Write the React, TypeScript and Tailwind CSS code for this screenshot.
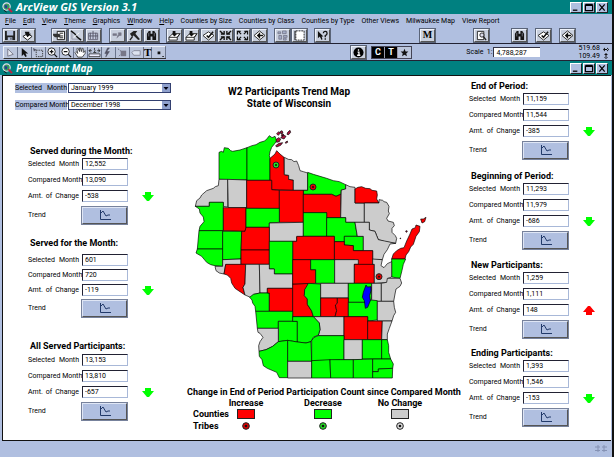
import { useId, type ReactNode } from "react";

const R = "#ff0000";
const G = "#00ff00";
const N = "#cccccc";

/* County shapes: fill colour and outline points */
const counties: [string, string][] = [
  [G, "117,100 125,97 130,100 133,86 145,88 152,95 158,97 180,93 201,86 201,183 117,181"],
  [G, "201,86 216,80 228,77 240,70 254,66 262,58 268,50 276,56 285,52 290,65 284,74 275,85 270,98 268,110 270,118 270,184 201,184"],
  [R, "270,118 285,105 290,95 300,105 312,115 313,167 326,169 326,181 340,183 340,214 275,212 275,184 270,184"],
  [N, "313,115 325,121 335,122 342,128 350,126 356,140 360,155 370,158 383,162 383,214 340,214 340,183 326,181 326,169 313,167"],
  [G, "383,160 400,166 420,172 440,178 460,185 478,188 497,197 497,210 484,213 482,226 468,232 455,226 370,226 370,214 383,214"],
  [N, "117,181 143,181 143,264 130,262 130,250 88,250 88,262 46,262 50,245 60,237 65,228 80,215 100,208 106,203 115,200"],
  [N, "143,181 200,183 200,266 145,266"],
  [R, "200,184 275,184 275,212 298,214 298,269 200,268"],
  [R, "298,214 370,214 370,310 298,310"],
  [G, "46,262 88,262 88,250 130,250 130,335 57,335 60,322 72,308 70,294 60,282 58,270"],
  [R, "130,266 198,266 198,325 195,337 130,335"],
  [G, "198,268 298,268 298,310 268,312 268,325 198,325"],
  [N, "268,312 370,310 370,352 350,354 350,367 268,367"],
  [R, "370,226 455,226 468,232 482,226 482,296 440,296 440,281 370,281"],
  [G, "370,281 440,281 440,352 370,352"],
  [N, "484,213 497,210 497,197 510,203 525,205 525,252 553,252 553,310 497,310 497,296 482,296"],
  [R, "525,210 534,205 545,203 557,208 570,209 576,214 590,216 592,228 590,240 597,252 525,252"],
  [N, "553,252 597,252 597,242 608,244 612,248 620,250 627,262 625,276 628,284 620,298 624,306 640,310 643,320 636,328 636,340 646,350 650,358 647,373 615,368 595,362 590,350 585,337 568,333 568,310 553,310"],
  [G, "440,296 497,296 497,310 525,310 532,352 493,352 493,368 463,368 463,352 440,352"],
  [G, "493,352 550,352 550,395 520,395 520,380 493,378"],
  [N, "525,310 568,310 568,333 585,337 590,350 595,362 647,373 630,375 622,392 612,406 607,422 578,422 578,395 550,395 550,352 532,352"],
  [R, "463,368 493,368 493,378 520,380 520,395 578,395 578,438 523,438 523,422 463,422"],
  [R, "350,352 463,352 463,422 338,422 338,367 350,367"],
  [R, "635,420 640,405 650,395 662,388 672,386 680,366 690,345 696,330 706,326 708,318 720,322 718,338 708,352 700,376 692,384 686,398 678,408 675,420"],
  [R, "722,300 730,300 738,295 734,308 726,312"],
  [G, "635,420 677,420 670,436 666,454 660,478 635,474"],
  [G, "57,335 128,335 128,390 52,390"],
  [G, "52,390 128,390 128,442 105,440 92,437 80,430 65,412 48,402"],
  [G, "128,337 185,337 183,420 128,422"],
  [N, "128,422 183,420 183,437 137,437 132,465 118,462 108,455 105,442 128,442"],
  [R, "195,337 198,325 268,325 268,393 183,393 185,337"],
  [R, "183,393 268,393 268,436 183,436"],
  [G, "268,367 338,367 338,465 283,465 283,450 268,450"],
  [R, "137,436 197,436 195,495 189,505 195,528 180,518 165,508 155,492 152,478 142,468 132,465"],
  [N, "197,436 238,436 240,522 222,526 214,536 195,528 189,505 195,495"],
  [N, "238,436 268,436 268,450 283,450 283,465 338,465 338,508 262,508 262,522 240,522"],
  [G, "209,535 220,526 240,522 268,522 268,577 227,577 225,562 218,552 216,543"],
  [R, "262,508 338,508 338,577 268,577 268,522 262,522"],
  [R, "338,495 385,493 384,503 374,512 373,530 382,540 382,556 395,576 400,593 338,593"],
  [R, "338,422 392,422 392,452 407,452 407,493 338,495"],
  [G, "392,422 464,422 464,493 407,493 407,452 392,452"],
  [N, "464,422 535,422 535,436 523,436 523,493 464,493"],
  [R, "523,436 583,436 583,493 523,493"],
  [N, "578,420 607,422 603,440 612,446 622,434 635,428 635,474 624,478 622,490 583,493 583,436 578,436"],
  [G, "385,493 422,495 422,593 400,593 395,576 382,556 382,540 373,530 374,512"],
  [N, "422,493 505,493 505,537 422,537"],
  [G, "505,493 575,493 575,540 560,550 505,550"],
  [N, "575,493 604,493 604,547 575,547"],
  [N, "604,493 620,490 622,478 660,478 665,492 660,502 648,510 645,525 641,547 604,547"],
  [R, "422,537 472,537 472,553 466,558 470,575 465,593 422,593"],
  [R, "472,537 505,537 505,593 465,593 470,575 466,558 472,553"],
  [G, "505,550 560,550 575,543 592,545 592,603 563,606 563,593 505,593"],
  [N, "592,547 641,547 643,565 647,580 641,590 636,606 592,606"],
  [N, "400,593 492,593 492,650 415,650 420,632 418,612"],
  [R, "492,593 563,593 563,662 492,662"],
  [R, "563,606 607,606 605,662 563,662"],
  [N, "607,606 636,606 628,628 622,645 622,662 605,662"],
  [G, "227,577 338,577 338,607 295,607 295,628 232,628"],
  [G, "295,607 352,607 352,669 323,664 295,668"],
  [G, "338,593 400,593 418,612 420,632 415,648 400,655 393,668 378,672 352,669 352,607 338,607"],
  [N, "232,628 295,628 295,668 278,682 258,692 237,697 236,680 240,668 249,655 240,643 234,640"],
  [G, "237,697 258,692 278,682 295,668 323,664 323,776 298,776 290,760 276,754 262,748 250,740 246,722 238,712"],
  [G, "323,664 352,669 378,672 393,668 395,727 323,727"],
  [N, "323,727 395,727 395,777 323,777"],
  [G, "395,665 402,655 415,650 492,650 492,722 395,727"],
  [N, "492,662 547,662 547,722 492,722"],
  [G, "547,662 605,662 605,720 547,720"],
  [G, "605,662 622,662 626,680 626,700 632,720 605,720"],
  [G, "395,725 450,722 452,777 395,777"],
  [G, "450,722 520,722 520,777 452,777"],
  [G, "520,722 578,720 578,777 520,777"],
  [G, "578,720 632,720 640,735 638,748 595,750 595,758 578,758"],
  [G, "578,758 595,758 595,750 638,748 637,777 578,777"],
  ["#0000ff", "558,498 562,504 573,503 573,515 569,530 571,545 563,565 556,568 553,545 547,535 550,520"],
];

function Tribe({ cx, cy, fill }: { cx: number; cy: number; fill: string }) {
  return (
    <g>
      <circle cx={cx} cy={cy} r={9} fill={fill} stroke="#222" strokeWidth={3} />
      <circle cx={cx} cy={cy} r={3} fill="#111" />
    </g>
  );
}

function WisconsinMap() {
  return (
    <svg viewBox="30 0 720 795" className="ml-[10px] mt-[9px] block h-[265px] w-[240px] shrink-0" role="img" aria-label="Wisconsin counties">
      {counties.map(([fill, points], i) => (
        <polygon key={i} points={points} fill={fill} stroke="#000" strokeWidth={2} strokeLinejoin="round" />
      ))}
      <g fill="#b01040" stroke="#000" strokeWidth={2}>
        <path d="M288 62l8-6 6 4-4 8-8 2zM302 56l8-8 8 4-6 8zM290 44l6-6 5 5-7 6zM300 38l6-3 3 6-6 3zM323 40l7-6 2 6-6 7-5-1zM287 80l10-7 11-2-6 8-12 5zM316 70l6-4 1 4-6 3zM306 44l5 2-2 6-5-2z" />
        <path d="M678 335l4 1-2 4-3-2zM660 357h2v2h-2z" />
      </g>
      <Tribe cx={288} cy={138} fill="#22dd22" />
      <Tribe cx={399} cy={204} fill="#e00000" />
      <Tribe cx={597} cy={473} fill="#e00000" />
    </svg>
  );
}

const icons: Record<string, ReactNode> = {
  save: (
    <>
      <path d="M1 1h11v10H1z" fill="#222" />
      <path d="M3 1h7v5H3zM4 8h5v3H4z" fill="#b4c0dc" />
      <path d="M7 8.500h1v2H7z" fill="#222" />
    </>
  ),
  addTheme: (
    <>
      <path d="M2 7l5-3 5 3-5 4z" fill="#fff" stroke="#111" />
      <path d="M4 2h5v2h2L7 8 5 5z" fill="#111" />
    </>
  ),
  props: (
    <>
      <path d="M4.500 1.500h8v9h-8z" fill="#fff" stroke="#111" />
      <path d="M0 4h6l2 1v3H2L0 6z" fill="#333" />
      <path d="M7 3.500h4M8 6.500h3M7 8.500h4" stroke="#111" />
    </>
  ),
  legend: (
    <>
      <path d="M2 2v8h10" stroke="#99a" fill="none" />
      <path d="M1 1l4 3 3 4 4 3" stroke="#111" strokeWidth="1.600" fill="none" />
      <path d="M4 8l6-5" stroke="#fff" />
    </>
  ),
  table: (
    <>
      <path d="M1.500 3.500h10v7h-10z" stroke="#667" fill="#c6cde0" />
      <path d="M3.500 3v7M6.500 1v9M9.500 3v7M2 6.500h10" stroke="#556" />
    </>
  ),
  query: (
    <path d="M2 4h4v2H2zM8 3h3v3H8zM6 9l3-3-2 0" fill="#778" stroke="#778" strokeWidth=".6" />
  ),
  hammer: (
    <>
      <path d="M2 4l4-3h4L8 4l5 6-2 1-5-5-2 1z" fill="#222" />
      <path d="M5 7l-3 4" stroke="#222" strokeWidth="1.500" />
    </>
  ),
  find: (
    <>
      <path d="M2 4l2-3h2v3h2V1h2l2 3v7H8V7H6v4H2z" fill="#151515" />
      <path d="M4 3v4M10 3v4" stroke="#99a" strokeWidth=".7" />
    </>
  ),
  layer: (
    <>
      <path d="M1 8l4-4h8l-3 4v3H1z" fill="#fff" stroke="#222" />
      <path d="M1 8h9l3-4" fill="none" stroke="#222" />
      <path d="M5 1h3v3h2L7 7 4 4h1z" fill="#111" />
    </>
  ),
  selected: (
    <>
      <path d="M1 6l6-4 6 4-6 5z" fill="#fff" stroke="#222" />
      <path d="M5 6l2 2 5-6" stroke="#111" strokeWidth="1.600" fill="none" />
    </>
  ),
  zoomIn: (
    <path d="M1 1l4 4M13 1L9 5M1 11l4-4M13 11L9 7M2 4.500h3.500V1M12 4.500H8.500V1M2 7.500h3.500V11M12 7.500H8.500V11" stroke="#111" strokeWidth="1.500" fill="none" />
  ),
  zoomOut: (
    <path d="M2 1l3.500 3.500M12 1L8.500 4.500M2 11l3.500-3.500M12 11L8.500 7.500M1.500 5V1.500H5M9 1.500h3.500V5M1.500 7v3.500H5M9 10.500h3.500V7" stroke="#111" strokeWidth="1.300" fill="none" />
  ),
  previous: (
    <>
      <path d="M1 6l6-5 6 5-6 5z" fill="#fff" stroke="#222" />
      <path d="M11 6H5M7 4L5 6l2 2z" stroke="#111" strokeWidth="1.400" fill="#111" />
    </>
  ),
  selectAll: (
    <path d="M2 2h3v2H2zM7 1h4v3H7zM3 6h3v4H3zM8 6h4v2H8zM8 9h3v2H8z" fill="#a4aec8" stroke="#667" strokeWidth=".7" />
  ),
  clear: (
    <>
      <path d="M3 1h9v10H3z" fill="#fff" stroke="#222" strokeDasharray="2 1" />
      <path d="M2 1v10" stroke="#222" />
    </>
  ),
  help: (
    <>
      <path d="M2 1v8l2-2 2 4 1-1-1-3h2z" fill="#111" />
      <path d="M8 3.500q0-2 2-2t2 2-2 2.500v2M10 9v1.500" stroke="#111" strokeWidth="1.400" fill="none" />
    </>
  ),
  report: (
    <>
      <path d="M2.500 1.500h7v9h-7z" fill="#fff" stroke="#222" />
      <circle cx="7.500" cy="5.500" r="2.300" fill="#dde" stroke="#222" />
      <path d="M9 7l3 4" stroke="#222" strokeWidth="1.500" />
    </>
  ),
  pick: <path d="M4 2v8l6-2z" fill="#e4e8f2" stroke="#778" />,
  pointer: <path d="M4 1v9l2-2 2 3 1.500-1L8 7h3z" fill="#111" />,
  marquee: (
    <>
      <path d="M4.500 3.500h7v7h-7z" fill="none" stroke="#333" strokeDasharray="1.500 1" />
      <path d="M1 1l4 2-3 2z" fill="#556" />
    </>
  ),
  plus: (
    <>
      <circle cx="6" cy="5" r="4" fill="#fff" stroke="#222" />
      <path d="M4 5h4M6 3v4M9 8l3 3" stroke="#111" strokeWidth="1.400" />
    </>
  ),
  minus: (
    <>
      <circle cx="6" cy="5" r="4" fill="#fff" stroke="#222" />
      <path d="M4 5h4M9 8l3 3" stroke="#111" strokeWidth="1.400" />
    </>
  ),
  hand: (
    <path d="M4 11L1 6l1-1 2 2-1-5 1-1 2 4V1h1l1 4 1-4 1 1v4l2-2v3l-3 4z" fill="#fff" stroke="#222" strokeWidth=".8" />
  ),
  measure: (
    <>
      <path d="M1 7.500h12v3H1z" fill="#eef" stroke="#222" strokeWidth=".8" />
      <path d="M1 4h3M10 4h3M3 2L1 4l2 2M11 2l2 2-2 2M7 1v2q2 1-1 3h3" stroke="#222" fill="none" strokeWidth=".9" />
    </>
  ),
  flash: <path d="M8 1L5 5h3l-4 6 1-4H3l3-6z" fill="#556" stroke="#445" strokeWidth=".5" />,
  area: (
    <>
      <path d="M5 4h6v6H5z" fill="#778" />
      <path d="M2 2l4 3M3 10l2-2" stroke="#667" strokeDasharray="1.500 1" />
    </>
  ),
  label: <path d="M2 6l2-2h7v5H4z" fill="#dde3f0" stroke="#778" strokeWidth=".8" />,
  info: (
    <>
      <circle cx="7" cy="6" r="5.500" fill="#000" />
      <path d="M7 2.500v1.500M6 5.500h1.500V9M5.500 9h3.500" stroke="#fff" strokeWidth="1.400" fill="none" />
    </>
  ),
  star: <path d="M7 2l1.200 2.800 3 .2-2.300 2 .8 3L7 8.400 4.300 10l.8-3-2.300-2 3-.2z" fill="#111" />,
  dot: <path d="M6 5h3v3H6zM11 10h2v1h-2z" fill="#111" />,
};

function Icon({ name }: { name: string }) {
  return (
    <svg viewBox="0 0 14 12" className="h-[11px] w-[13px]" aria-hidden="true">
      {icons[name]}
    </svg>
  );
}

function ToolButton({ name, label, children }: { name?: string; label: string; children?: ReactNode }) {
  return (
    <button
      type="button"
      aria-label={label}
      className="flex h-[13px] w-[15px] shrink-0 items-center justify-center border border-t-[#eef2fa] border-l-[#eef2fa] border-r-[#555] border-b-[#555] bg-[#c9d0de] outline outline-[#5a6478]"
    >
      {name ? <Icon name={name} /> : children}
    </button>
  );
}

function ToolGroup({ names, className }: { names: string[]; className: string }) {
  return (
    <div className={`flex shrink-0 gap-[2px] ${className}`}>
      {names.map((n, i) => (
        <ToolButton key={i} name={n} label={n} />
      ))}
    </div>
  );
}

const smallTools = ["pick", "pointer", "marquee", "plus", "minus", "hand", "measure", "flash", "area", "label", "text", "dot"];

function WindowButtons() {
  const shapes = ["M2 8h5", "M1.500 2.500h8v6h-8zM1.500 1.500h8", "M2.500 1.500l6 7M8.500 1.500l-6 7"];
  const labels = ["Minimize", "Maximize", "Close"];
  return (
    <div className="ml-auto flex gap-[1px]">
      {shapes.map((d, i) => (
        <button
          key={i}
          type="button"
          aria-label={labels[i]}
          className="flex h-[11px] w-[12px] items-center justify-center border border-t-white border-l-white border-r-[#222] border-b-[#222] bg-[#b0bfe0]"
        >
          <svg viewBox="0 0 11 10" className="h-[9px] w-[10px]" aria-hidden="true">
            <path d={d} fill="none" stroke="#000" strokeWidth="1.400" />
          </svg>
        </button>
      ))}
    </div>
  );
}

function Logo() {
  return (
    <svg viewBox="0 0 12 12" className="h-[11px] w-[11px] shrink-0" aria-hidden="true">
      <circle cx="5" cy="5" r="4" fill="#3a9a5a" stroke="#dde" strokeWidth="1.200" />
      <path d="M3 3l3 1-1 3-2-1z" fill="#223a9a" />
      <path d="M7 7l4 4" stroke="#c02040" strokeWidth="2" />
      <path d="M2 9l3 2" stroke="#111" />
    </svg>
  );
}

function TitleBar({ title, as: Tag }: { title: string; as: "h1" | "h2" }) {
  return (
    <div className="flex h-[14px] shrink-0 items-center bg-[#008080] pl-[2px] pr-[4px]">
      <Logo />
      <Tag
        className={`ml-[3px] whitespace-nowrap font-['Open_Sans',sans-serif] leading-[14px] font-bold italic text-white ${
          Tag === "h1" ? "text-[11px]" : "text-[10px]"
        }`}
      >
        {title}
      </Tag>
      <WindowButtons />
    </div>
  );
}

const menus: [string, boolean][] = [
  ["File", true],
  ["Edit", true],
  ["View", true],
  ["Theme", true],
  ["Graphics", true],
  ["Window", true],
  ["Help", true],
  ["Counties by Size", false],
  ["Counties by Class", false],
  ["Counties by Type", false],
  ["Other Views", false],
  ["Milwaukee Map", false],
  ["View Report", false],
];

function Field({ label, value, children }: { label: string; value: string; children?: ReactNode }) {
  const id = useId();
  return (
    <div className="flex h-3 items-center">
      <label htmlFor={id} className="w-[51px] whitespace-nowrap [text-align-last:justify]">
        {label}
      </label>
      <input
        id={id}
        readOnly
        value={value}
        className="ml-[3px] h-3 w-[46px] border border-t-[#223] border-l-[#223] border-r-[#a8b8d8] border-b-[#a8b8d8] bg-white pl-[2px]"
      />
      {children}
    </div>
  );
}

function Arrow({ up }: { up?: boolean }) {
  return (
    <svg viewBox="0 0 12 9" className="ml-[14px] h-[9px] w-3" role="img" aria-label={up ? "Increase" : "Decrease"}>
      <path d={up ? "M3 9h6V6h3L7 0H5L0 6h3z" : "M3 0h6v3h3L7 9H5L0 3h3z"} fill={up ? R : G} />
    </svg>
  );
}

type StatProps = {
  title: string;
  selected: string;
  compared: string;
  change: string;
  up?: boolean;
  className: string;
  rows?: string;
};

function Stat({ title, selected, compared, change, up, className, rows = "mt-[1px] gap-1" }: StatProps) {
  return (
    <section className={className}>
      <h3 className="ml-[2px] h-3 whitespace-nowrap text-[9px] leading-3 font-bold">{title}</h3>
      <div className={`flex flex-col ${rows}`}>
        <Field label="Selected Month" value={selected} />
        <Field label="Compared Month" value={compared} />
        <Field label="Amt. of Change" value={change}>
          <Arrow up={up} />
        </Field>
        <div className="flex h-[18px] items-center">
          <span className="w-[51px]">Trend</span>
          <button
            type="button"
            aria-label={`Trend, ${title}`}
            className="ml-[3px] flex h-[17px] w-[45px] items-center justify-center border border-t-[#dfe6f5] border-l-[#dfe6f5] border-r-[#555] border-b-[#555] bg-[#b0bfe0] outline outline-[#77829c]"
          >
            <svg viewBox="0 0 12 12" className="h-3 w-3" aria-hidden="true">
              <path d="M1.500 1v9.500H12M2 4l2-2 3 5 2-1 2 0" fill="none" stroke="#223a6a" />
            </svg>
          </button>
        </div>
      </div>
    </section>
  );
}

function MonthSelect({ label, value }: { label: string; value: string }) {
  const id = useId();
  return (
    <div className="flex h-[10px] items-center">
      <label htmlFor={id} className="w-[52px] whitespace-nowrap bg-[#b0bfe0] leading-[10px] [text-align-last:justify]">
        {label}
      </label>
      <div className="relative ml-[1px] w-[103px]">
        <select id={id} className="block h-[10px] w-full appearance-none border border-[#334070] bg-white pl-[2px] leading-[8px]">
          <option>{value}</option>
        </select>
        <svg viewBox="0 0 8 8" className="pointer-events-none absolute top-[1px] right-[1px] h-2 w-2" aria-hidden="true">
          <path d="M0 0h8v8H0z" fill="#8fa0cc" />
          <path d="M1.500 3h5L4 6z" fill="#001" />
        </svg>
      </div>
    </div>
  );
}

const legend = [
  { name: "Increase", swatch: "bg-[#ff0000]", dot: "#e00000" },
  { name: "Decrease", swatch: "bg-[#00ff00]", dot: "#22dd22" },
  { name: "No Change", swatch: "bg-[#cccccc]", dot: "#dddddd" },
];

export default function App() {
  return (
    <div className="flex min-h-screen bg-[#111] font-[Roboto,'Liberation_Sans',sans-serif] text-[7px] leading-3 text-black">
      <div className="mr-[2px] flex min-w-0 flex-1 flex-col bg-[#b0bfe0]">
        <TitleBar as="h1" title="ArcView GIS Version 3.1" />
        <nav className="flex h-[13px] items-center gap-[7px] whitespace-nowrap pl-[5px]">
          {menus.map(([m, key]) => (
            <button key={m} type="button" className="leading-3">
              {key ? <u>{m[0]}</u> : m[0]}
              {m.slice(1)}
            </button>
          ))}
        </nav>
        <div className="flex h-[17px] items-center border-b border-[#223] pl-[3px]">
          <ToolGroup names={["save", "addTheme"]} className="" />
          <ToolGroup names={["props", "legend", "table"]} className="ml-[17px]" />
          <ToolGroup names={["query", "hammer", "find"]} className="ml-[9px]" />
          <ToolGroup names={["layer", "layer", "selected", "zoomIn", "zoomOut", "previous"]} className="ml-[8px]" />
          <ToolGroup names={["selectAll", "clear"]} className="ml-[8px]" />
          <ToolGroup names={["help"]} className="ml-[8px]" />
          <div className="ml-[90px]">
            <ToolButton label="Milwaukee">
              <span className="font-['Liberation_Serif',serif] text-[10px] font-bold">M</span>
            </ToolButton>
          </div>
          <ToolGroup names={["report"]} className="ml-[39px]" />
          <ToolGroup names={["find"]} className="ml-[23px]" />
          <ToolGroup names={["selected"]} className="ml-[9px]" />
          <ToolGroup names={["previous"]} className="ml-[9px]" />
        </div>
        <div className="flex h-[17px] items-center border-b border-[#223] pl-[3px]">
          <div className="flex w-[163px] border border-t-[#eef2fa] border-l-[#eef2fa] border-r-[#333] border-b-[#333]">
            {smallTools.map((n) => (
              <button
                key={n}
                type="button"
                aria-label={n}
                className="flex h-[11px] flex-1 items-center justify-center border-r border-[#6a748c] bg-[#bcc6dc]"
              >
                {n === "text" ? <span className="font-['Liberation_Serif',serif] text-[11px] leading-[11px] font-bold">T</span> : <Icon name={n} />}
              </button>
            ))}
          </div>
          <div className="ml-[185px]">
            <ToolButton name="info" label="Identify" />
          </div>
          <div className="ml-[5px] flex h-[13px] border border-[#445] bg-[#bcc6dc]">
            {["C", "T"].map((c) => (
              <button key={c} type="button" className="w-[13px] border-r border-[#99a] bg-black text-center text-[9px] leading-[11px] font-bold text-white">
                {c}
              </button>
            ))}
            <button type="button" aria-label="Star" className="flex w-[13px] items-center justify-center">
              <Icon name="star" />
            </button>
          </div>
          <label htmlFor="scale" className="ml-auto whitespace-nowrap">
            Scale&nbsp; 1:
          </label>
          <input
            id="scale"
            readOnly
            value="4,788,287"
            className="ml-[1px] h-[10px] w-[47px] border-t border-l border-[#334] bg-white pl-[2px]"
          />
          <div className="mr-[3px] ml-[38px] flex items-center gap-[3px]">
            <div className="text-right leading-[8px]">
              <div>519.68</div>
              <div>109.49</div>
            </div>
            <svg viewBox="0 0 6 13" className="h-[13px] w-[6px]" aria-hidden="true">
              <path d="M0 3.500l2-2v4zM6 3.500l-2-2v4zM1 3h4v1H1zM3 7l2 2H1zM3 13l2-2H1zM2.500 8h1v4h-1z" fill="#111" />
            </svg>
          </div>
        </div>
        <TitleBar as="h2" title="Participant Map" />
        <main className="ml-[2px] mr-[1px] flex flex-1 border-t border-b border-l border-[#111] bg-white">
          <div className="w-[177px] shrink-0 pt-[7px] pl-[12px]">
            <div className="flex flex-col gap-[7px]">
              <MonthSelect label="Selected Month" value="January  1999" />
              <MonthSelect label="Compared Month" value="December 1998" />
            </div>
            <div className="pl-[13px]">
              <Stat title="Served during the Month:" selected="12,552" compared="13,090" change="-538" className="mt-[35px]" />
              <Stat title="Served for the Month:" selected="601" compared="720" change="-119" rows="mt-[5px] gap-[3px]" className="mt-[13px]" />
              <Stat title="All Served Participants:" selected="13,153" compared="13,810" change="-657" rows="mt-[2px] gap-1" className="mt-[23px]" />
            </div>
          </div>
          <div className="flex min-w-0 flex-1 flex-col pt-[10px]">
            <h2 className="w-[218px] text-center text-[10px] leading-3 font-bold whitespace-nowrap">
              W2 Participants Trend Map
              <br />
              State of Wisconsin
            </h2>
            <WisconsinMap />
            <div className="mt-[2px] ml-[7px] whitespace-nowrap text-[9px] font-bold">
              <p>Change in End of Period Participation Count since Compared Month</p>
              <div className="ml-[6px] flex gap-[31px]">
                <div className="-mr-[31px] w-[30px] pt-[10px]">
                  <div>Counties</div>
                  <div>Tribes</div>
                </div>
                {legend.map((l) => (
                  <div key={l.name} className="flex w-[46px] flex-col items-center">
                    <div className="leading-[11px]">{l.name}</div>
                    <div className={`h-[10px] w-[18px] border border-[#222] ${l.swatch}`} />
                    <svg viewBox="0 0 24 24" className="mt-[3px] h-2 w-2" aria-hidden="true">
                      <circle cx="12" cy="12" r="10" fill={l.dot} stroke="#222" strokeWidth={3} />
                      <circle cx="12" cy="12" r="4" fill="#111" />
                    </svg>
                  </div>
                ))}
              </div>
            </div>
          </div>
          <div className="w-[142px] shrink-0 pt-[4px]">
            <Stat title="End of Period:" selected="11,159" compared="11,544" change="-385" className="" />
            <Stat title="Beginning of Period:" selected="11,293" compared="11,979" change="-686" className="mt-[11px]" />
            <Stat title="New Participants:" selected="1,259" compared="1,111" change="148" up className="mt-[10px]" />
            <Stat title="Ending Participants:" selected="1,393" compared="1,546" change="-153" className="mt-[9px]" />
          </div>
        </main>
        <footer className="flex h-4 items-center justify-end pr-[5px]">
          <svg viewBox="0 0 12 8" className="h-2 w-3" aria-hidden="true">
            <path d="M0 2h5M7 2h5M0 5.500h5M7 5.500h5M3 0v7M9 0v7" stroke="#8592b4" />
          </svg>
        </footer>
      </div>
    </div>
  );
}
